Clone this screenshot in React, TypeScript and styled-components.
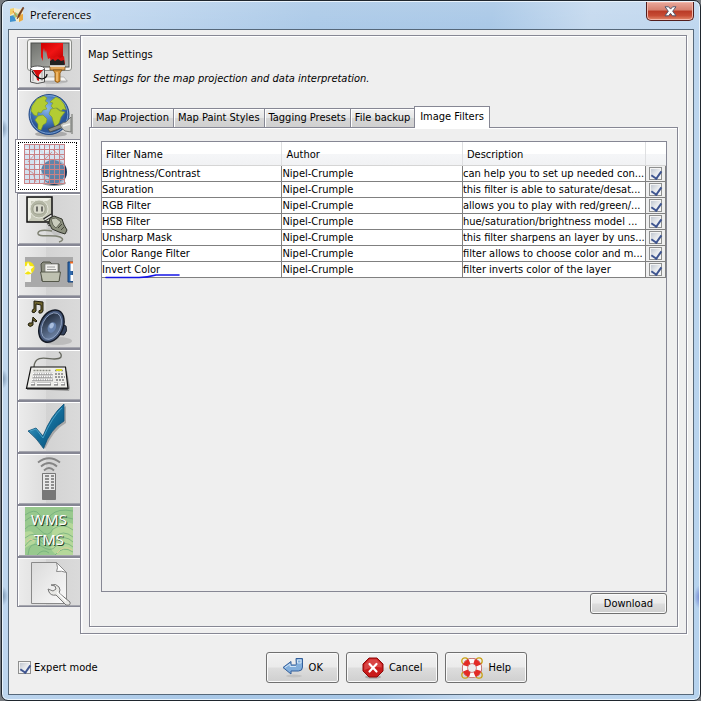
import React, { ReactNode, useState } from "react";
import styled, { createGlobalStyle, css } from "styled-components";

const LINE = "#868794";
const UI = `"DejaVu Sans Condensed", "Noto Sans", sans-serif`;

const GlobalStyle = createGlobalStyle`
  * { box-sizing: border-box; }
  body { margin: 0; background: #777b80; }
  button, input { font: inherit; color: inherit; }
`;

const Window = styled.div`
  min-height: 100vh;
  margin-left: 1px;
  display: flex;
  flex-direction: column;
  padding: 1px 6px 5px 6px;
  border: 1px solid #1f262e;
  border-radius: 7px;
  box-shadow: inset 0 0 0 1px #e9f3fc;
  background:
    radial-gradient(ellipse 6px 12px at 100% 596px, #6f82cf, transparent),
    radial-gradient(ellipse 6px 10px at 0 128px, #7590ac, transparent),
    radial-gradient(ellipse 6px 10px at 0 378px, #7590ac, transparent),
    radial-gradient(ellipse 6px 10px at 0 595px, #7590ac, transparent),
    linear-gradient(#ffffff22, #ffffff00 40px),
    linear-gradient(100deg, #c6dbf0 0, #bdd5ee 15%, #a9c8e7 38%, #a6c6e6 60%, #c3d8ee 72%, #b5d2ee 100%);
  font-family: ${UI};
  font-size: 11px;
  line-height: 14px;
  color: #000;
`;

const TitleBar = styled.header`
  display: flex;
  align-items: center;
  gap: 5px;
  height: 27px;
  padding: 0 0 1px 1px;
`;

const Title = styled.h1`
  flex: 1;
  margin: 0;
  font: 11px/16px "Open Sans", "Noto Sans", sans-serif;
  text-shadow: 0 0 6px #fff, 0 0 10px #fff;
`;

const CloseButton = styled.button`
  align-self: flex-start;
  display: grid;
  place-items: center;
  width: 48px;
  height: 19px;
  padding: 0;
  border: 1px solid #521d1c;
  border-top: 0;
  border-radius: 0 0 5px 5px;
  box-shadow: inset 0 0 0 1px #f2b7aa;
  background: linear-gradient(#e9a99c, #d6806f 45%, #b93a26 50%, #c64b34 75%, #e38a6d);
`;

const Client = styled.main`
  flex: 1;
  display: flex;
  flex-direction: column;
  padding: 5px 6px 11px 8px;
  border: 1px solid #56687a;
  background: #efefef;
`;

const Workspace = styled.div`
  flex: 1;
  display: flex;
`;

const Categories = styled.nav`
  display: flex;
  flex-direction: column;
  width: 63px;
  padding-top: 2px;
`;

const Category = styled.button<{ $active?: boolean }>`
  display: flex;
  justify-content: center;
  height: 52px;
  padding: 1px 1px 0 0;
  border: 1px solid ${LINE};
  border-right: 0;
  box-shadow: inset 1px 1px #fff, inset 0 -1px #a5a6ae;
  background: linear-gradient(90deg, #ececec, #dcdcdc 45%, #d3d3d3 46%, #dadada);
  &:last-child { height: 50px; }
  svg { flex: none; display: block; }
  ${(p) =>
    p.$active &&
    css`
      z-index: 1;
      height: 54px;
      margin: -2px 0 0 -2px;
      padding: 2px 0 1px;
      background: #fff;
      box-shadow: none;
      outline: 1px dotted #000;
      outline-offset: -4px;
    `}
`;

const Panel = styled.section`
  flex: 1;
  min-width: 0;
  display: flex;
  flex-direction: column;
  padding: 12px 8px 6px 7px;
  border: 1px solid ${LINE};
  box-shadow: inset 1px 1px #fff, inset 2px 0 #f8f8f8, 1px 1px #fff;
`;

const Heading = styled.h2`
  margin: 0;
  font: inherit;
`;

const Summary = styled.p`
  margin: 10px 5px 20px;
  font-style: italic;
`;

const TabList = styled.div`
  display: flex;
  align-items: flex-end;
  padding-left: 3px;
`;

const Tab = styled.button<{ $active?: boolean }>`
  height: 19px;
  padding: 0 4px;
  border: 1px solid ${LINE};
  border-right-width: 0;
  border-bottom: 0;
  box-shadow: inset 1px 1px #fff;
  background: linear-gradient(#f3f3f3, #e6e6e6 48%, #d6d6d6 52%, #d0d0d0);
  white-space: nowrap;
  ${(p) =>
    p.$active &&
    css`
      z-index: 1;
      height: 22px;
      margin-bottom: -1px;
      padding: 0 5px 2px;
      border-right-width: 1px;
      background: #fff;
    `}
`;

const TabPane = styled.div`
  flex: 1;
  display: flex;
  flex-direction: column;
  align-items: flex-end;
  gap: 1px;
  margin-left: 1px;
  padding: 13px 10px 12px 11px;
  border: 1px solid ${LINE};
  box-shadow: inset 1px 1px #fff, 1px 1px #fff;
`;

const TableFrame = styled.div`
  flex: 1;
  align-self: stretch;
  border: 1px solid ${LINE};
`;

const Table = styled.table`
  width: 100%;
  table-layout: fixed;
  border-spacing: 0;
`;

const HeadCell = styled.th`
  height: 24px;
  padding: 2px 4px 0;
  border-right: 1px solid #dedfe1;
  border-bottom: 1px solid #d5d5d5;
  background: linear-gradient(#fff 50%, #f5f6f8 52%, #f1f2f4);
  font-weight: normal;
  text-align: left;
  &:last-child { border-right: 0; }
`;

const Cell = styled.td`
  position: relative;
  height: 16px;
  padding: 1px 0 0;
  border-right: 1px solid #808080;
  border-bottom: 1px solid #808080;
  background: #fff;
  line-height: 14px;
  white-space: nowrap;
`;

const TickCell = styled(Cell)`
  padding: 0 0 0 3px;
  background: #efefef;
`;

const Marker = styled.svg`
  position: absolute;
  left: 2px;
  top: 10px;
  z-index: 1;
`;

const Tick = styled.input`
  appearance: none;
  display: block;
  width: 13px;
  height: 13px;
  margin: 0;
  padding: 1px 3px;
  border: 1px solid #8e8f8f;
  background: linear-gradient(135deg, #b9c0cb, #e9ebee 55%, #fafafa);
  box-shadow: inset 0 0 0 1px #f4f4f4;
  &:checked::after {
    content: "";
    display: block;
    width: 5px;
    height: 8px;
    border: solid #3f5590;
    border-width: 0 2px 2px 0;
    transform: rotate(35deg);
  }
`;

const Button = styled.button<{ $large?: boolean }>`
  display: flex;
  align-items: center;
  justify-content: center;
  gap: 5px;
  height: ${(p) => (p.$large ? 31 : 21)}px;
  padding: 0 ${(p) => (p.$large ? 15 : 13)}px;
  border: 1px solid #707070;
  border-radius: 3px;
  box-shadow: inset 0 0 0 1px #fafafa;
  background: linear-gradient(#f2f2f2, #ebebeb 48%, #dddddd 52%, #cfcfcf);
`;

const Footer = styled.footer`
  display: flex;
  align-items: center;
  gap: 8px;
  margin-top: 18px;
`;

const Expert = styled.label`
  display: flex;
  align-items: center;
  gap: 3px;
  padding-left: 1px;
`;

const Actions = styled.div`
  flex: 1;
  display: flex;
  justify-content: center;
  gap: 7px;
`;

const Icon = ({ children, size = 48, box = 48 }: { children: ReactNode; size?: number; box?: number }) => (
  <svg width={size} height={size} viewBox={`0 0 ${box} ${box}`} aria-hidden="true">
    {children}
  </svg>
);

const DisplayIcon = () => (
  <Icon>
    <defs>
      <linearGradient id="scr" x2="1" y2="1"><stop stopColor="#6e706c" /><stop offset="1" stopColor="#b5b7b2" /></linearGradient>
      <linearGradient id="red" x2="1" y2="1"><stop stopColor="#c00" /><stop offset=".5" stopColor="#f01414" /><stop offset="1" stopColor="#b80000" /></linearGradient>
    </defs>
    <ellipse cx="28" cy="42" rx="15" ry="3" fill="#bbb" />
    <rect x="2.5" y=".5" width="44" height="31" rx="2.5" fill="#f4f4f2" stroke="#8b8d89" />
    <rect x="6" y="4" width="38" height="24" fill="url(#scr)" stroke="#4d4f4c" />
    <path d="M22 32h12l2 7H20z" fill="#d8d8d5" />
    <path d="M19 38h20l3 4H17z" fill="#f4f4f2" stroke="#999" strokeWidth=".6" />
    <path d="M16 4h22v17H26l-1-2-2 1-1-4-1-5-1 3-1-5-1 4v9l-2-4z" fill="url(#red)" />
    <path d="M26 17l3 2 3-2 3 2 4-2 1 8H25z" fill="#e01010" />
    <path d="M25 22l3-2 2 2 3-2 3 2 3-1 1 6H25z" fill="#222" />
    <path d="M25 27h15v4H25z" fill="#e3a85c" stroke="#6d4a1c" strokeWidth=".7" />
    <path d="M25 27h15" stroke="#f5f5f5" strokeWidth="1.500" />
    <path d="M28 31h9l-2 3v8q-2.500 3-5 0v-8z" fill="#d89336" stroke="#84500f" strokeWidth=".8" />
    <path d="M32 33v9" stroke="#f8c77b" strokeWidth="1.400" />
    <path d="M5.500 30v13q6.500 3 14 0V30z" fill="#e8e8e6" stroke="#555" />
    <path d="M8 32v10M17 32v10" stroke="#bbb" strokeWidth="1.500" />
    <ellipse cx="12.500" cy="29.500" rx="7" ry="2.500" fill="#fff" stroke="#555" />
    <path d="M8 31h10l-4 5v6l-2-1-1-5z" fill="#d50c0c" />
    <path d="M7 32q4 7 10 8 5-1 5-5" fill="none" stroke="#111" strokeWidth="1.200" />
  </Icon>
);

const GlobeIcon = () => (
  <Icon>
    <defs>
      <radialGradient id="sea" cx=".45" cy=".35"><stop stopColor="#8db9ea" /><stop offset=".6" stopColor="#4c80c2" /><stop offset="1" stopColor="#2a5596" /></radialGradient>
    </defs>
    <ellipse cx="26" cy="43" rx="16" ry="3" fill="#aaa" />
    <circle cx="24" cy="23.500" r="20" fill="url(#sea)" stroke="#244a86" />
    <circle cx="24" cy="23.500" r="18.800" fill="none" stroke="#8db3e0" strokeWidth=".8" />
    <g fill="#b3cc33" stroke="#7f9a1e" strokeWidth=".6">
      <path d="M7 15l5-7 7-3 3 2-2 3 3 2-3 3 2 3-4 1-2 3-3-1-1 4-3-1-3-4z" />
      <path d="M13 25l5-1 4 4-1 4-3 2-2 5-3-1v-5l-3-4z" />
      <path d="M27 9l4-3 4 2 4 5 2 6-3-1-2 2-4-3-3 1-3-3 2-3-3-1z" />
      <path d="M26 18l5-1 4 3 5 1-4 5-2 6-4 4-2-6-1-4-3-3z" />
    </g>
    <path d="M23 38l13-5 3 3-14 5z" fill="#888a85" stroke="#444642" strokeWidth=".8" />
    <path d="M35 34q3-3 6-3l5-5v15l-6-1q-3-2-5-6z" fill="#c9cac5" stroke="#666864" strokeWidth=".8" />
    <path d="M47 23v20" stroke="#7b7d78" strokeWidth="1.200" />
    <path d="M38 35l7-2" fill="none" stroke="#f5f5f2" strokeWidth="1.500" />
  </Icon>
);

const GridIcon = () => (
  <Icon>
    <defs>
      <radialGradient id="ball" cx=".35" cy=".3"><stop stopColor="#6e97bb" /><stop offset=".7" stopColor="#2f5c88" /><stop offset="1" stopColor="#1a3658" /></radialGradient>
    </defs>
    <ellipse cx="30" cy="41" rx="12" ry="3" fill="#999" />
    <circle cx="30" cy="30" r="13" fill="url(#ball)" />
    <rect x=".5" y="2.500" width="40" height="39" fill="#c8dbec" opacity=".8" />
    <circle cx="29" cy="30" r="12" fill="#3a6690" opacity=".68" />
    <path d="M1 6l7 7 6-3 4 6-5 7 4 10 8 5M18 3l3 6 8-4 4 8" fill="none" stroke="#eef6fc" strokeWidth="4" opacity=".65" />
    <path d="M1 26l8 5 3 9M20 18l8-8M4 20l7-8M29 8l11 9" fill="none" stroke="#cf8585" strokeWidth=".8" />
    <path d="M.5 2v40M5.500 2v40M10.500 2v40M15.500 2v40M20.500 2v40M25.500 2v40M30.500 2v40M35.500 2v40M40.500 2v40M0 2.500h41M0 7.500h41M0 12.500h41M0 17.500h41M0 22.500h41M0 27.500h41M0 32.500h41M0 37.500h41M0 41.500h41" stroke="#c98286" strokeWidth="1" />
  </Icon>
);

const PlugIcon = () => (
  <Icon>
    <path d="M22 33l18-5 3 10-13 3z" fill="#bbb" opacity=".7" />
    <path d="M27 36q-13-2-14 2c-1 5 15 1 22 4 4 2 3 4-1 5" fill="none" stroke="#7f8273" strokeWidth="1.500" />
    <rect x="2" y="2" width="25" height="25" fill="#c6c8b8" stroke="#111" strokeWidth="1.500" />
    <path d="M3 3h23l-4 3H6v17l-3 3z" fill="#edeee4" />
    <circle cx="14" cy="14" r="9" fill="#b3b6a4" stroke="#e4e5da" />
    <rect x="8" y="9" width="12" height="10" rx="4" fill="#d9dacc" stroke="#909383" strokeWidth=".7" />
    <path d="M12 11.500v5M17 11.500v5" stroke="#333" strokeWidth="1.300" />
    <path d="M19 25l8-5M23 30l8-5" stroke="#222" strokeWidth="3.500" />
    <path d="M19.500 24.800l7-4.300M23.500 29.800l7-4.500" stroke="#e4e4e0" strokeWidth="1.500" />
    <path d="M25 23l4-2 8 3 2 6 3 5-2 4-6-2-7-3-3-6z" fill="#8c907e" stroke="#33352d" />
    <path d="M26 24l5-1 5 4-5 6-3-3z" fill="#c9ccbd" stroke="#4b4d42" strokeWidth=".7" />
    <path d="M33 33l4-4M36 35l3-3" stroke="#44463b" />
  </Icon>
);

const ToolbarIcon = () => (
  <Icon>
    <path d="M0 10h48v30H0z" fill="#a9a9a9" />
    <path d="M0 17h6v18H0z" fill="#f0f0ee" />
    <circle cx="3" cy="21" r="6.500" fill="#f4e411" />
    <path d="M3 15l1.800 4 4.200.4-3.200 2.800 1 4.300L3 24.300-.5 26.500l1-4.300-3-2.800 4-.4z" fill="#fffde0" />
    <path d="M16 17l2-2h7l2 2h7v17H17z" fill="#8c8f80" stroke="#4b4d42" />
    <path d="M20 17h13v12H20z" fill="#f1f1ee" stroke="#777" strokeWidth=".7" />
    <path d="M22 20h8M22 22.500h9" stroke="#999" />
    <path d="M15.500 25h20l-1.500 9.500H17.500z" fill="#bec1b0" stroke="#55584a" />
    <path d="M43 15h5v20h-5z" fill="#2f69ac" stroke="#173e73" />
    <path d="M45.500 15h3v9h-3zM45.500 28h3v6h-3z" fill="#fff" />
    <path d="M45 14.500h3v2h-3z" fill="#ef6b20" />
  </Icon>
);

const AudioIcon = () => (
  <Icon>
    <defs>
      <linearGradient id="cone" x2="1" y2="1"><stop stopColor="#151d2b" /><stop offset="1" stopColor="#7b93b8" /></linearGradient>
    </defs>
    <ellipse cx="33" cy="42" rx="14" ry="4" fill="#aaa" opacity=".6" />
    <path d="M30 13q4 13 11 14 2 5-2 9-8-2-15 7z" fill="#34425c" stroke="#161c28" />
    <g transform="rotate(25 26 28)">
      <ellipse cx="26" cy="27" rx="11.500" ry="17" fill="#46587a" stroke="#151b27" strokeWidth="1.500" />
      <ellipse cx="26" cy="27" rx="9" ry="14" fill="url(#cone)" stroke="#9aacca" strokeWidth=".8" />
      <ellipse cx="27" cy="28" rx="4" ry="5.500" fill="#6883ae" />
      <ellipse cx="26" cy="26.500" rx="2" ry="3" fill="#a9bedd" />
    </g>
    <g fill="#6e642f" stroke="#211e0e">
      <path d="M9 2l9 1v9q-1 3-4 2-1-3 2-3V6l-5-1v7q-2 3-4 1 0-3 2-3z" />
      <path d="M8 18l4 4-1 1-3-2v5q-3 3-5 0 0-3 4-2z" />
    </g>
  </Icon>
);

const KeyboardIcon = () => (
  <Icon>
    <path d="M9 16C10-1 31 13 36 6q1-3-2-5" fill="none" stroke="#66685f" strokeWidth="1.300" />
    <path d="M4 38l40 2 1-3-3-17z" fill="#999" />
    <path d="M6 16h34.500l2.500 21.500H1.500z" fill="#eeeeea" stroke="#111" strokeWidth="1.200" />
    <path d="M2 37.500h41" stroke="#222" strokeWidth="2" />
    <path d="M8.500 19.500h18M30 19.500h8" stroke="#888a83" strokeWidth="1.500" strokeDasharray="2 1" />
    <path d="M31 19h6" stroke="#dddb27" strokeWidth="2" />
    <path d="M8 23h20M7.500 26h20M7 29h21" stroke="#999" strokeWidth="2.400" />
    <path d="M8 22.500h20M7.500 25.500h20M7 28.500h21" stroke="#fff" strokeWidth="1.600" strokeDasharray="1.500 .8" />
    <path d="M30 23h9M30 26h10M31 29h9" stroke="#999" strokeWidth="2" strokeDasharray="2 1" />
    <path d="M6 33h4M12 33h14M29 33h4M36 33h4" stroke="#777" strokeWidth="2.800" />
    <path d="M6 32.500h3.500M12 32.500h13.500M29 32.500h3.500M36 32.500h3.500" stroke="#fff" strokeWidth="1.600" />
  </Icon>
);

const CheckIcon = () => (
  <Icon>
    <defs>
      <linearGradient id="ok" x2="1" y2="1"><stop stopColor="#64b5d6" /><stop offset=".5" stopColor="#14709e" /><stop offset="1" stopColor="#07466b" /></linearGradient>
    </defs>
    <path d="M5 30l6-2 6 6Q27 12 41 3v17Q29 26 20 46z" fill="#777" opacity=".5" />
    <path d="M3 28l8-3 7 8Q26 12 39 1v17Q25 26 18.500 45.500 12 35 3 28z" fill="url(#ok)" stroke="#0e5278" strokeWidth=".8" />
    <path d="M5 28l6-2 7 9Q27 14 37 5" fill="none" stroke="#4a9fc4" strokeWidth="1" />
  </Icon>
);

const RemoteIcon = () => (
  <Icon>
    <g fill="none" stroke="#858585" strokeWidth="1.800">
      <path d="M13 7.500Q24-1 35 7.500" />
      <path d="M16 11.500Q24 4.500 32 11.500" />
      <path d="M19 15.500Q24 10.500 29 15.500" />
    </g>
    <path d="M17.500 18.500h13v26h-13z" fill="#777" stroke="#777" />
    <path d="M18 19h12v16H18z" fill="#e8e8e8" />
    <path d="M20 21h4M26 21h3M20 24h4M26 24h3M20 27h4M26 27h3M20 30h4M26 30h3M20 33h4M26 33h3" stroke="#707070" strokeWidth="1.500" />
  </Icon>
);

const ImageryText = styled.text`
  font: 15px "Noto Sans", "Open Sans", sans-serif;
  text-anchor: middle;
  fill: #fff;
  text-shadow: 1px 1px #26402a;
`;

const ImageryIcon = () => (
  <Icon>
    <path d="M0 0h48v48H0z" fill="#98c98e" />
    <path d="M28 20q10-8 20-3v31H31q-9-8-5-15zM0 25q8-3 11 5 0 9-6 8l-5 3z" fill="#b5d89a" />
    <g fill="none" stroke="#6da978" strokeWidth=".7">
      <path d="M0 8Q10 1 14 7q5 8 12 1t22-4M0 14q9-8 14-1t14 1q8-6 20-2M0 22q7-8 15 1t13-1q10-7 20 1" />
      <path d="M0 31q10-8 16 1 8 8 14-2 8-8 18 0M0 39q8-12 17-3 8 8 14-2 9-7 17 1M3 48q1-15 13-9 10 7 15 0 9-6 17 1M12 48q6-7 12-2M30 48q8-10 18-3" />
    </g>
    <path d="M32 46q7-9 15-3M2 35q3-5 7-1" stroke="#dccf9c" fill="none" />
    <ImageryText x="24" y="18">WMS</ImageryText>
    <ImageryText x="24" y="38">TMS</ImageryText>
  </Icon>
);

const AdvancedIcon = () => (
  <Icon>
    <defs>
      <linearGradient id="page" x2="1" y2="1"><stop stopColor="#dadada" /><stop offset="1" stopColor="#fafafa" /></linearGradient>
    </defs>
    <path d="M6.500 3.500h25l10 10v31h-35z" fill="url(#page)" stroke="#8a8a8a" />
    <path d="M31.500 3.500q2 6 0 9 5-1 10 1z" fill="#fff" stroke="#8a8a8a" />
    <path d="M26 26q5-2 8 2 2 3 0 6l11 9q1 4-4 3L31 36q-5 1-7-3l-1-3 5 2 3-2-1-3z" fill="#e8e8e5" stroke="#777" />
    <path d="M32 33l9 9" stroke="#fff" strokeWidth="1.200" />
  </Icon>
);

const AppIcon = () => (
  <Icon size={16} box={16}>
    <path d="M1 2l4-1 5 1 4-1v12l-4 2-5-1-4 1z" fill="#f5eccb" />
    <path d="M1 2l4-1v5l-4 2z" fill="#f1cf6b" />
    <path d="M1 9l4-1 2 6-6 1z" fill="#3e91d0" />
    <path d="M10 8l4-1v6l-4 2z" fill="#e9a840" />
    <path d="M6 5l3 2-2 4-3-2z" fill="#9ccb87" />
    <path d="M14 0l1 1-5 9-2 2 1-4z" fill="#7b401d" stroke="#5c2d12" strokeWidth=".4" />
    <path d="M4 4l4 6" stroke="#e8862f" strokeWidth="1" />
  </Icon>
);

const OkIcon = () => (
  <Icon size={22} box={22}>
    <ellipse cx="12" cy="19" rx="8" ry="1.500" fill="#c2c2c2" />
    <path d="M14 1.500h6.500V10q0 4-4 4H9v3L1 10.500l8-6V8h4.500q.8 0 .8-1z" fill="#82aedb" stroke="#335f9b" />
    <path d="M15.500 3H19v3h-3.500zM3 10.500l5-3.500v2.500h6" fill="none" stroke="#d2e5f7" />
  </Icon>
);

const CancelIcon = () => (
  <Icon size={22} box={22}>
    <ellipse cx="11" cy="20" rx="8" ry="1.800" fill="#aaa" />
    <path d="M7 1h8l6 6v7l-6 6H7l-6-6V7z" fill="#c91b1b" stroke="#8d0b0b" />
    <path d="M7.500 2.300h7l5.200 5.200v3Q11 9 2.300 13V7.500z" fill="#d94444" />
    <path d="M7.500 7l7 7.500m0-7.500l-7 7.500" stroke="#fff" strokeWidth="2.200" strokeLinecap="round" />
  </Icon>
);

const HelpIcon = () => (
  <Icon size={22} box={22}>
    <g fill="none" stroke="#c9a114" strokeWidth="1.300">
      <circle cx="4" cy="4" r="3.200" /><circle cx="18" cy="4" r="3.200" /><circle cx="4" cy="18" r="3.200" /><circle cx="18" cy="18" r="3.200" />
    </g>
    <circle cx="11" cy="11" r="7" fill="#ececec" stroke="#a31616" strokeWidth="6" />
    <circle cx="11" cy="11" r="7" fill="none" stroke="#fafafa" strokeWidth="5" />
    <circle cx="11" cy="11" r="7" fill="none" stroke="#e32b25" strokeWidth="5" pathLength="12" strokeDasharray="1.700 1.300" strokeDashoffset="-.6" />
  </Icon>
);

const categories = [
  ["Display settings", DisplayIcon],
  ["Connection settings", GlobeIcon],
  ["Map settings", GridIcon],
  ["Plugins", PlugIcon],
  ["Toolbar", ToolbarIcon],
  ["Audio settings", AudioIcon],
  ["Keyboard shortcuts", KeyboardIcon],
  ["Data validator", CheckIcon],
  ["Remote control", RemoteIcon],
  ["Imagery", ImageryIcon],
  ["Advanced", AdvancedIcon],
] as const;

const tabs = ["Map Projection", "Map Paint Styles", "Tagging Presets", "File backup", "Image Filters"];

const filters = [
  ["Brightness/Contrast", "can help you to set up needed con..."],
  ["Saturation", "this filter is able to saturate/desat..."],
  ["RGB Filter", "allows you to play with red/green/..."],
  ["HSB Filter", "hue/saturation/brightness model ..."],
  ["Unsharp Mask", "this filter sharpens an layer by uns..."],
  ["Color Range Filter", "filter allows to choose color and m..."],
  ["Invert Color", "filter inverts color of the layer"],
];

export default function App() {
  const [category, setCategory] = useState(2);
  const [tab, setTab] = useState(4);
  return (
    <>
      <GlobalStyle />
      <Window>
        <TitleBar>
          <AppIcon />
          <Title>Preferences</Title>
          <CloseButton aria-label="Close">
            <svg width="13" height="11" viewBox="0 0 13 11" aria-hidden="true">
              <path d="M1 .8h3.600l2 2.300 2-2.300H12L8.700 5.200 12 9.800H8.400L6.500 7.300 4.600 9.800H1l3.300-4.600z" fill="#fff" stroke="#53566b" />
            </svg>
          </CloseButton>
        </TitleBar>
        <Client>
          <Workspace>
            <Categories>
              {categories.map(([name, Glyph], i) => (
                <Category key={name} aria-label={name} $active={i === category} onClick={() => setCategory(i)}>
                  <Glyph />
                </Category>
              ))}
            </Categories>
            <Panel>
              <Heading>Map Settings</Heading>
              <Summary>Settings for the map projection and data interpretation.</Summary>
              <TabList role="tablist">
                {tabs.map((name, i) => (
                  <Tab key={name} role="tab" aria-selected={i === tab} $active={i === tab} onClick={() => setTab(i)}>
                    {name}
                  </Tab>
                ))}
              </TabList>
              <TabPane role="tabpanel">
                <TableFrame>
                  <Table>
                    <colgroup>
                      <col width="32%" />
                      <col width="32%" />
                      <col />
                      <col width="20" />
                    </colgroup>
                    <thead>
                      <tr>
                        <HeadCell>Filter Name</HeadCell>
                        <HeadCell>Author</HeadCell>
                        <HeadCell>Description</HeadCell>
                        <HeadCell />
                      </tr>
                    </thead>
                    <tbody>
                      {filters.map(([name, text], i) => (
                        <tr key={name}>
                          <Cell>
                            {name}
                            {i === filters.length - 1 && (
                              <Marker width="78" height="7" aria-hidden="true">
                                <path d="M2 5.500h33q8 0 17-2.500h23" fill="none" stroke="#1414e6" strokeWidth="1.600" strokeLinecap="round" />
                              </Marker>
                            )}
                          </Cell>
                          <Cell>Nipel-Crumple</Cell>
                          <Cell>{text}</Cell>
                          <TickCell>
                            <Tick type="checkbox" defaultChecked aria-label={`Enable ${name}`} />
                          </TickCell>
                        </tr>
                      ))}
                    </tbody>
                  </Table>
                </TableFrame>
                <Button>Download</Button>
              </TabPane>
            </Panel>
          </Workspace>
          <Footer>
            <Expert>
              <Tick type="checkbox" defaultChecked />
              Expert mode
            </Expert>
            <Actions>
              <Button $large><OkIcon />OK</Button>
              <Button $large><CancelIcon />Cancel</Button>
              <Button $large><HelpIcon />Help</Button>
            </Actions>
          </Footer>
        </Client>
      </Window>
    </>
  );
}
